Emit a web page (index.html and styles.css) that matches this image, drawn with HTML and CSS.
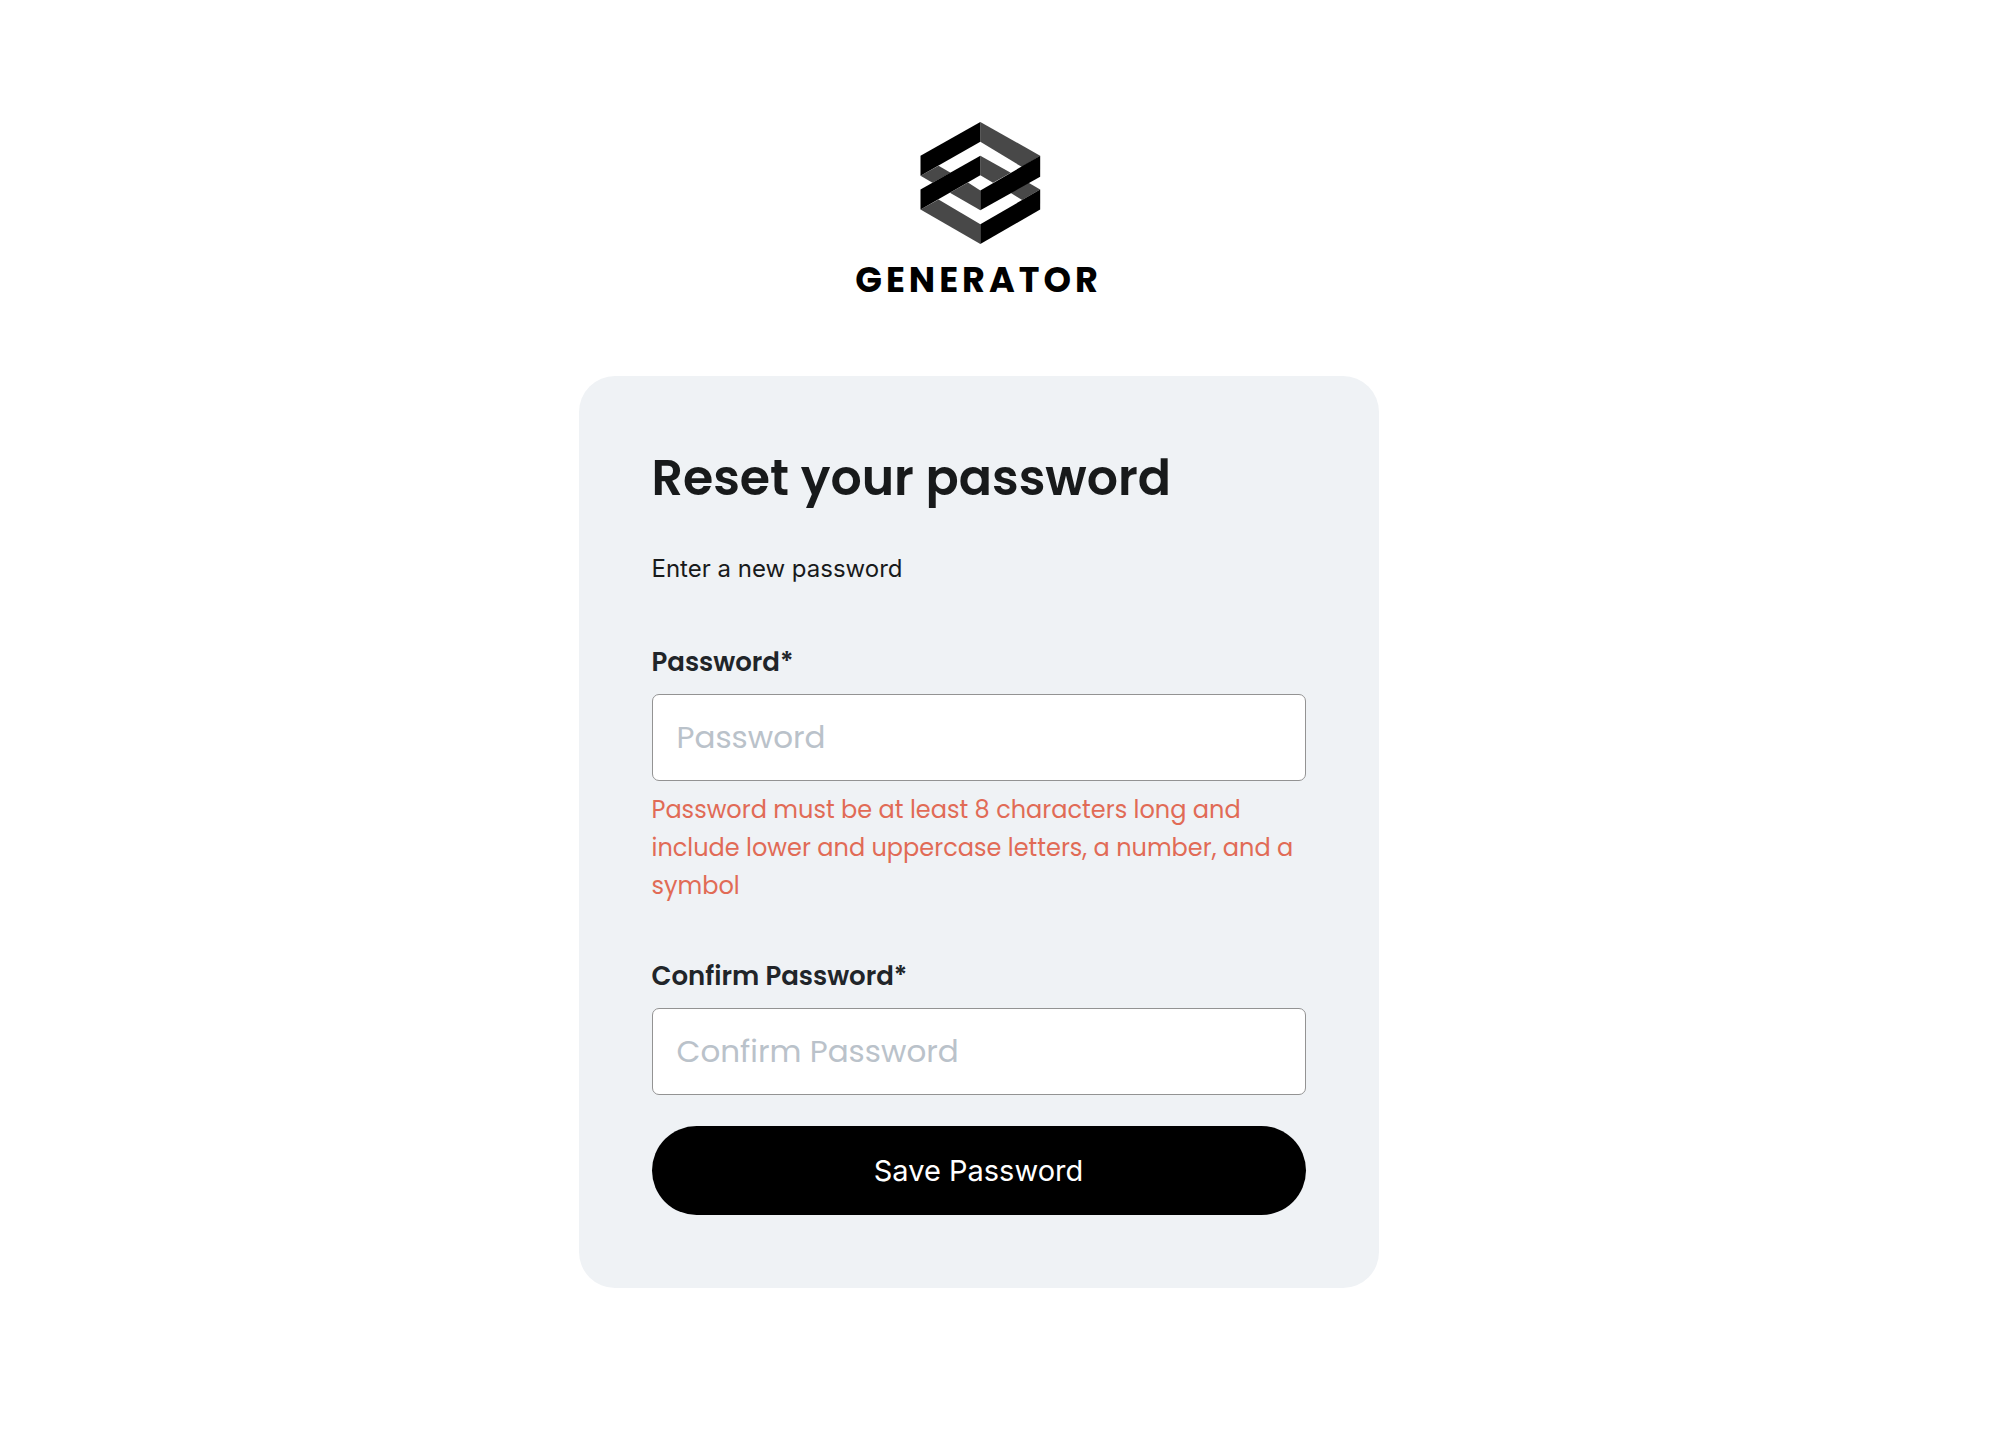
FILE: index.html
```html
<!DOCTYPE html>
<html lang="en">
<head>
  <meta charset="UTF-8">
  <title>Reset your password</title>
  <meta name="viewport" content="width=device-width,initial-scale=1">
  <link rel="stylesheet" href="styles.css">
</head>
<body>
<main>
  <div class="logo">
    <svg class="logo-mark" viewBox="57 36 358 365" aria-hidden="true">
      <g fill="#484848">
        <path d="M240 36 419 137 365 171 240 95z"/>
        <path d="M61 197 115 167 151 188 97 218z"/>
        <path d="M240 137 331 188 278 218 240 195z"/>
        <path d="M203 217 240 241V300L149 248z"/>
        <path d="M330 248 383 217 419 238 365 269z"/>
        <path d="M61 298 115 268 240 342V401z"/>
      </g>
      <path d="M240 36V95L61 197V137z"/>
      <path d="M240 137V195L61 298V238z"/>
      <path d="M419 137V200L240 300V241z"/>
      <path d="M419 238V298L240 401V342z"/>
    </svg>
    <div class="logo-name">GENERATOR</div>
  </div>

  <form class="card">
    <h1>Reset your password</h1>
    <p class="intro">Enter a new password</p>

    <div class="field">
      <label for="password">Password*</label>
      <input type="password" id="password" placeholder="Password" aria-describedby="password-error">
      <p class="error" id="password-error">Password must be at least 8 characters long and include lower and uppercase letters, a number, and a symbol</p>
    </div>

    <div class="field">
      <label for="confirm">Confirm Password*</label>
      <input type="password" id="confirm" placeholder="Confirm Password">
    </div>

    <button type="submit">Save Password</button>
  </form>
</main>
</body>
</html>
```

FILE: styles.css
```css
:root {
  --bg: #fff;
  --card: #eff2f5;
  --fg: #181a1b;
  --label: #212529;
  --border: #939393;
  --placeholder: #bac2ca;
  --error: #e16b56;
  --heading: Poppins, Inter, sans-serif;
  --sans: Inter, sans-serif;
}
* {
  box-sizing: border-box;
}
body {
  margin: 0;
  background: var(--bg);
  color: var(--fg);
  font-family: var(--sans);
}
main {
  display: flex;
  flex-direction: column;
  align-items: center;
  gap: 75px;
  padding: 122px 43px 122px 0;
}
.logo {
  display: flex;
  flex-direction: column;
  align-items: center;
  gap: 14px;
}
.logo-mark {
  width: 120px;
  height: 122px;
  overflow: visible;
}
.logo-name {
  font-family: var(--heading);
  font-size: 35px;
  font-weight: 700;
  line-height: 43px;
  letter-spacing: 4px;
  color: #000;
}
.card {
  width: 100%;
  max-width: 800px;
  padding: 73px;
  background: var(--card);
  border-radius: 36px;
}
h1 {
  margin: 0 0 43px;
  font-family: var(--heading);
  font-size: 49px;
  font-weight: 600;
  line-height: 58px;
}
.intro {
  margin: 0 0 55px;
  font-size: 24px;
  line-height: 38px;
}
.field {
  margin-bottom: 52px;
  font-family: var(--heading);
}
.field:last-of-type {
  margin-bottom: 31px;
}
label {
  display: block;
  margin-bottom: 13px;
  font-size: 26px;
  font-weight: 600;
  line-height: 38px;
  color: var(--label);
}
input {
  display: block;
  width: 100%;
  height: 87px;
  padding: 0 24px;
  border: 1px solid var(--border);
  border-radius: 7px;
  background: #fff;
  color: var(--label);
  font-family: inherit;
  font-size: 31px;
}
input::placeholder {
  color: var(--placeholder);
  opacity: 1;
}
.error {
  margin: 10px 0 0;
  font-size: 24px;
  line-height: 38px;
  color: var(--error);
}
button {
  display: block;
  width: 100%;
  height: 89px;
  border: 0;
  border-radius: 45px;
  background: #000;
  color: #fff;
  font-family: inherit;
  font-size: 29px;
}
```
